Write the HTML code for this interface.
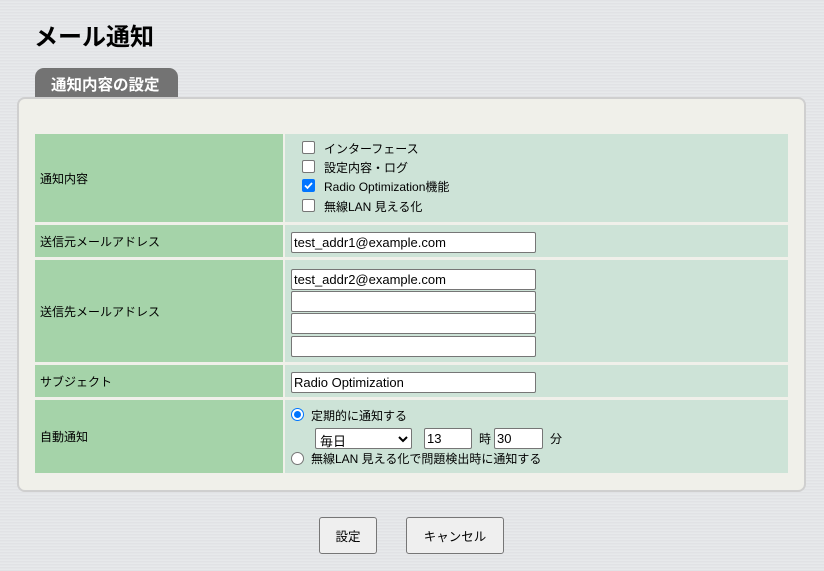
<!DOCTYPE html>
<html><head><meta charset="utf-8"><style>
*{margin:0;padding:0;box-sizing:border-box}
body{width:824px;height:571px;overflow:hidden;position:relative;font-family:"Liberation Sans","Noto Sans CJK JP",sans-serif;font-size:12px;color:#000;
background:repeating-linear-gradient(180deg,#e6e7ea 0px,#dcdde1 1px,#eceef0 2px,#e2e3e6 3px);}
.a{position:absolute}
h1{position:absolute;left:34px;top:17px;font-size:24px;font-weight:bold}
.tab{left:35px;top:68px;width:143px;height:30px;background:#737373;border-radius:9px 9px 0 0;color:#fff;font-weight:bold;font-size:15.5px;padding:5px 0 0 16px}
.panel{left:17px;top:97px;width:789px;height:395px;background:#f0f0ea;border:2px solid #cfcfcf;border-radius:8px}
.l{background:#a5d3a9;left:35px;width:248px;padding-left:5px;display:flex;align-items:center}
.r{background:#cde3d7;left:285px;width:503px}
.in{position:absolute;left:291px;width:245px;height:21px;background:#fff;border:1px solid #767676;border-radius:2px;font-size:13px;padding:2px 0 0 2px;color:#000}
.cb{position:absolute;width:13px;height:13px;border:1px solid #767676;border-radius:2px;background:#fff;left:302px}
.t{position:absolute;font-size:12px;white-space:nowrap}
.btn{position:absolute;top:517px;height:37px;background:#efefef;border:1px solid #767676;border-radius:3px;font-size:12.5px;display:flex;align-items:center;justify-content:center}
.rad{position:absolute;width:13px;height:13px;border-radius:50%;border:1px solid #767676;background:#fff}
</style></head><body>
<h1>メール通知</h1>
<div class="a tab">通知内容の設定</div>
<div class="a panel"></div>

<div class="a l" style="top:134px;height:88px">通知内容</div>
<div class="a r" style="top:134px;height:88px"></div>
<div class="cb" style="top:141px"></div><div class="t" style="left:324px;top:140px">インターフェース</div>
<div class="cb" style="top:160px"></div><div class="t" style="left:324px;top:159px">設定内容・ログ</div>
<div class="cb" style="top:179px;background:#0075ff;border-color:#0075ff"><svg width="11" height="11" viewBox="0 0 11 11" style="position:absolute;left:0;top:0"><path d="M2 5.5l2.5 2.5 4.5-5" stroke="#fff" stroke-width="1.8" fill="none"/></svg></div><div class="t" style="left:324px;top:178px">Radio Optimization機能</div>
<div class="cb" style="top:199px"></div><div class="t" style="left:324px;top:198px">無線LAN 見える化</div>

<div class="a l" style="top:225px;height:32px">送信元メールアドレス</div>
<div class="a r" style="top:225px;height:32px"></div>
<div class="in" style="top:232px">test_addr1@example.com</div>

<div class="a l" style="top:260px;height:102px">送信先メールアドレス</div>
<div class="a r" style="top:260px;height:102px"></div>
<div class="in" style="top:269px">test_addr2@example.com</div>
<div class="in" style="top:291px"></div>
<div class="in" style="top:313px"></div>
<div class="in" style="top:336px"></div>

<div class="a l" style="top:365px;height:32px">サブジェクト</div>
<div class="a r" style="top:365px;height:32px"></div>
<div class="in" style="top:372px">Radio Optimization</div>

<div class="a l" style="top:400px;height:73px">自動通知</div>
<div class="a r" style="top:400px;height:73px"></div>
<div class="rad" style="left:291px;top:408px;border:1px solid #0075ff"><div style="position:absolute;left:2px;top:2px;width:7px;height:7px;border-radius:50%;background:#0075ff"></div></div>
<div class="t" style="left:311px;top:407px">定期的に通知する</div>
<div class="a" style="left:315px;top:428px;width:97px;height:21px;background:#fff;border:1px solid #767676;border-radius:2px;padding:2px 0 0 4px;font-size:13px">毎日<svg class="a" style="left:82px;top:7px" width="10" height="7"><path d="M1 1l4 4 4-4" stroke="#000" stroke-width="2" fill="none"/></svg></div>
<div class="in" style="left:424px;top:428px;width:48px">13</div>
<div class="t" style="left:479px;top:430px">時</div>
<div class="in" style="left:494px;top:428px;width:49px">30</div>
<div class="t" style="left:550px;top:430px">分</div>
<div class="rad" style="left:291px;top:452px"></div>
<div class="t" style="left:311px;top:450px">無線LAN 見える化で問題検出時に通知する</div>

<div class="btn" style="left:319px;width:58px">設定</div>
<div class="btn" style="left:406px;width:98px">キャンセル</div>
</body></html>
